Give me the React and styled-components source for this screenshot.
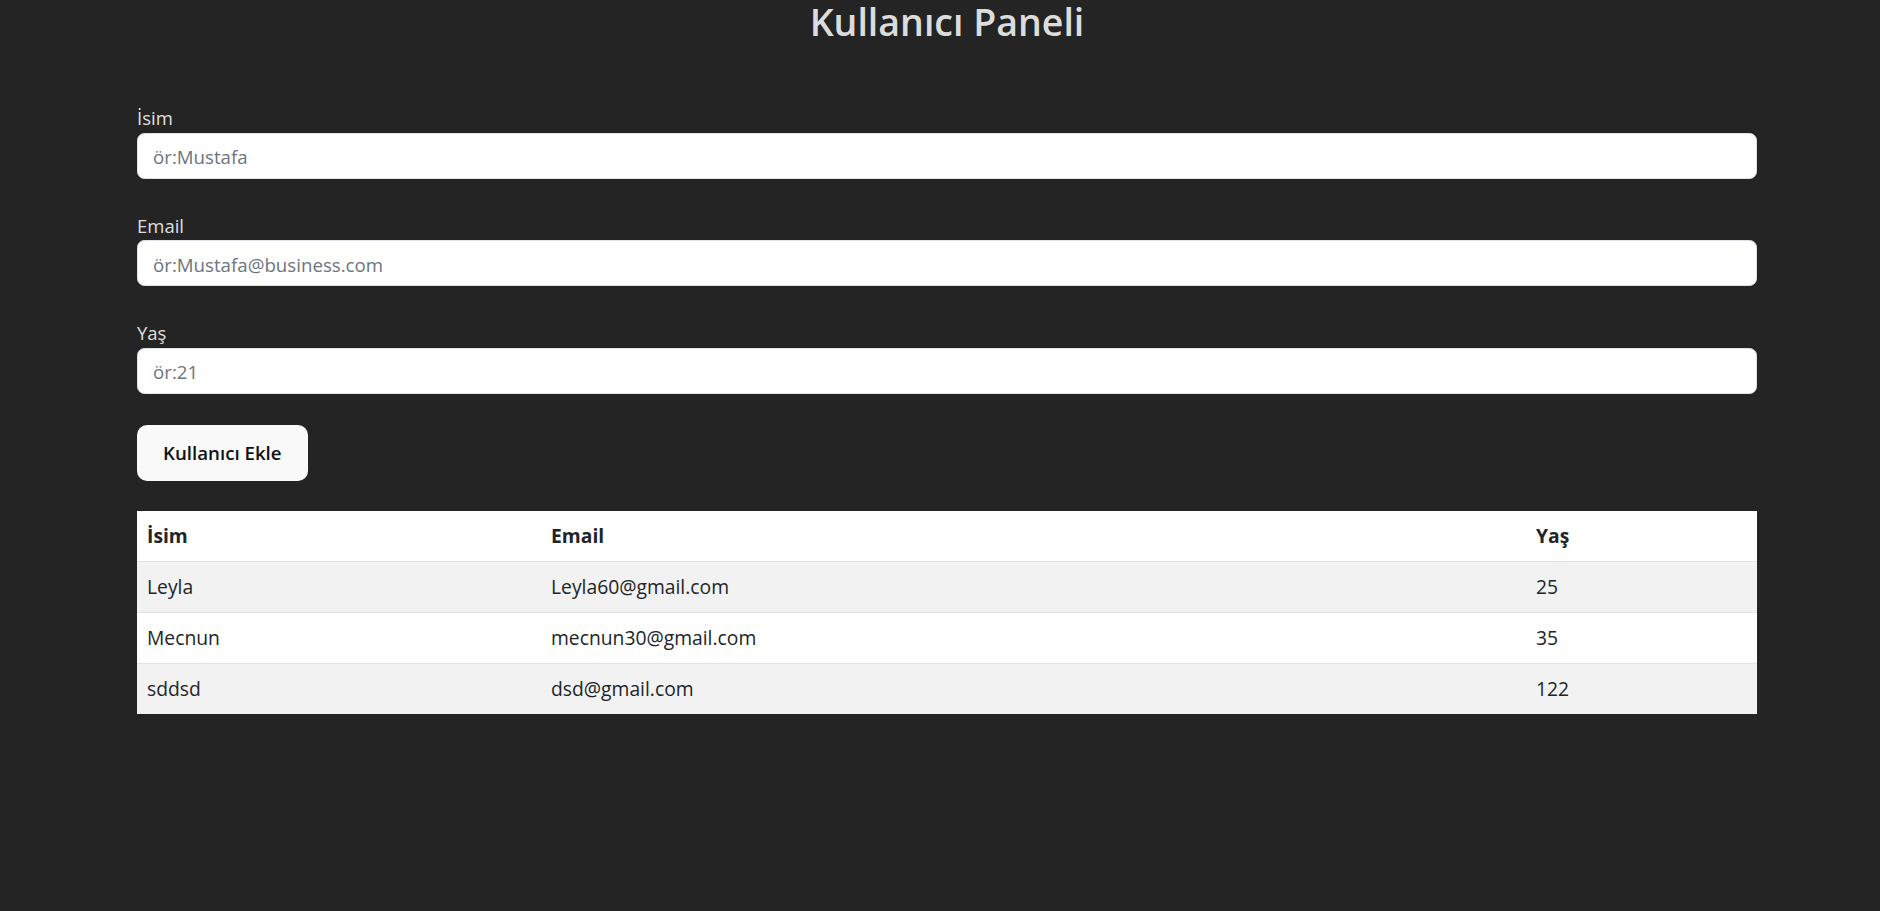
import React from "react";
import styled, { createGlobalStyle } from "styled-components";

const GlobalStyle = createGlobalStyle`
  html, body {
    margin: 0;
    padding: 0;
    background: #242424;
    color: rgba(255, 255, 255, 0.87);
    font-family: "Open Sans", "Noto Sans", sans-serif;
    font-size: 20px;
    line-height: 1.5;
  }
  * {
    box-sizing: border-box;
  }
`;

const users = [
  { name: "Leyla", email: "Leyla60@gmail.com", age: 25 },
  { name: "Mecnun", email: "mecnun30@gmail.com", age: 35 },
  { name: "sddsd", email: "dsd@gmail.com", age: 122 },
];

const App = () => {
  return (
    <Page>
      <GlobalStyle />
      <Title>Kullanıcı Paneli</Title>

      <Form onSubmit={(e) => e.preventDefault()}>
        <Field>
          <Label htmlFor="name">İsim</Label>
          <Input id="name" placeholder="ör:Mustafa" />
        </Field>
        <Field>
          <Label htmlFor="email">Email</Label>
          <Input id="email" placeholder="ör:Mustafa@business.com" />
        </Field>
        <Field>
          <Label htmlFor="age">Yaş</Label>
          <Input id="age" placeholder="ör:21" />
        </Field>
        <AddButton type="submit">Kullanıcı Ekle</AddButton>
      </Form>

      <Table>
        <thead>
          <tr>
            <Th $width="404px">İsim</Th>
            <Th $width="985px">Email</Th>
            <Th>Yaş</Th>
          </tr>
        </thead>
        <tbody>
          {users.map((user, i) => (
            <Row key={user.email} $striped={i % 2 === 0}>
              <Td>{user.name}</Td>
              <Td>{user.email}</Td>
              <Td>{user.age}</Td>
            </Row>
          ))}
        </tbody>
      </Table>
    </Page>
  );
};
export default App;

const Page = styled.div`
  width: 1620px;
  margin-left: 137px;
  padding-top: 2px;
  padding-bottom: 40px;
`;

const Title = styled.h1`
  margin: 0 0 62px;
  text-align: center;
  font-size: 37.5px;
  line-height: 40px;
  font-weight: 600;
  color: rgba(255, 255, 255, 0.87);
`;

const Form = styled.form`
  display: flex;
  flex-direction: column;
  align-items: flex-start;
`;

const Field = styled.div`
  display: flex;
  flex-direction: column;
  width: 100%;
  margin-bottom: 33px;

  &:last-of-type {
    margin-bottom: 31px;
  }
`;

const Label = styled.label`
  font-size: 18.5px;
  line-height: 28.5px;
  color: rgba(255, 255, 255, 0.87);
`;

const Input = styled.input`
  width: 100%;
  height: 46px;
  padding: 8px 15px 6px;
  font-family: inherit;
  font-size: 18.7px;
  line-height: 30px;
  color: #212529;
  background: #ffffff;
  border: 1px solid #dee2e6;
  border-radius: 7.5px;
  outline: none;

  &::placeholder {
    color: #6c757d;
  }
`;

const AddButton = styled.button`
  height: 56px;
  padding: 12px 25px;
  font-family: inherit;
  font-size: 18.7px;
  line-height: 30px;
  font-weight: 600;
  color: #111111;
  background: #f9f9f9;
  border: 1px solid transparent;
  border-radius: 10px;
  cursor: pointer;
`;

const Table = styled.table`
  width: 100%;
  margin-top: 30px;
  border-collapse: collapse;
  background: #ffffff;
  color: #212529;
  font-size: 19.3px;
  line-height: 30px;
`;

const Th = styled.th`
  width: ${(p) => p.$width || "auto"};
  padding: 10px;
  text-align: left;
  font-weight: 700;
  border-bottom: 1px solid #dee2e6;
`;

const Row = styled.tr`
  background: ${(p) => (p.$striped ? "#f2f2f2" : "#ffffff")};

  &:not(:last-child) td {
    border-bottom: 1px solid #dee2e6;
  }
`;

const Td = styled.td`
  padding: 10px;
`;
